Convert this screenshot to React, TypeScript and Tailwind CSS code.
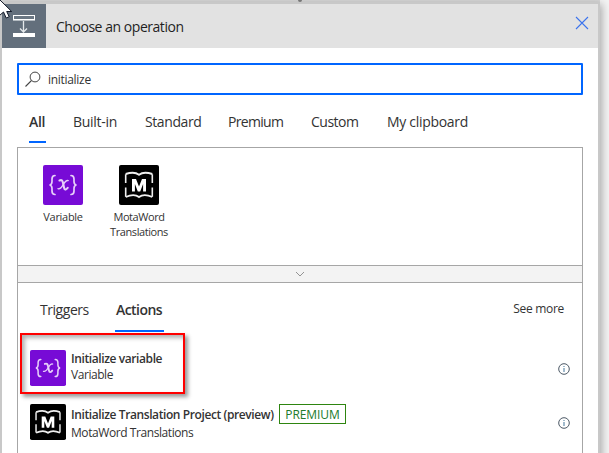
import React from "react";

function VariableIcon({ className }: { className: string }) {
  return (
    <svg viewBox="0 0 40 40" className={className}>
      <rect width="40" height="40" rx="2" fill="#770bd6" />
      <g fill="none" stroke="#e6cff9" strokeWidth="1.7" strokeLinecap="round">
        <path d="M12 10.500C9.500 10.500 9 11.500 9 14v2.500c0 2.300-.6 3.300-2.500 3.500 1.900.2 2.500 1.200 2.500 3.500V26c0 2.500.5 3.500 3 3.500" />
        <path d="M28 10.500c2.500 0 3 1 3 3.500v2.500c0 2.300.6 3.300 2.500 3.500-1.900.2-2.500 1.200-2.500 3.500V26c0 2.500-.5 3.500-3 3.500" />
        <path d="M16.500 15.500c2.500-1 3 .2 3.600 2.700l.9 4.300c.6 2.800 1.800 2.600 3.700.4" strokeWidth="2.100" />
        <path d="M25.200 15.600c-2.300-.8-4 2.400-5.200 4.400-1.300 2.300-2.900 4.500-5 3.700" strokeWidth="1.400" />
      </g>
    </svg>
  );
}

function MotaWordIcon({ className }: { className: string }) {
  return (
    <svg viewBox="0 0 40 40" className={className}>
      <rect width="40" height="40" rx="2" fill="#000" />
      <g fill="none" stroke="#f0f0f0" strokeWidth="1.600">
        <path d="M6.700 18V9.200M33.300 18V9.200M6.700 22.500v9.300M33.300 22.500v9.300" />
        <path d="M6.700 9C12 7.200 17 7.400 20 9.700c3-2.300 8-2.500 13.300-.7M6.700 32C12 29.600 17 29.700 20 32c3-2.300 8-2.400 13.300 0" strokeWidth="1.900" />
      </g>
      <path d="M13 26.500V14h4l3 7.600 3-7.600h4v12.500h-2.900V19l-2.900 7.500h-2.400L15.900 19v7.500z" fill="#fff" />
    </svg>
  );
}

function InfoIcon() {
  return (
    <svg width="12" height="12" viewBox="0 0 12 12" className="shrink-0">
      <circle cx="6" cy="6" r="5.300" fill="none" stroke="#4c5966" strokeWidth="1" />
      <path d="M6 5v4M6 3v1" stroke="#5583a5" strokeWidth="1.100" />
    </svg>
  );
}

export default function App() {
  return (
    <div className="relative h-[453px] w-[609px] overflow-hidden bg-[#f3f3f3] font-['Open_Sans','Noto_Sans',sans-serif] text-[#333] whitespace-nowrap">
      <div className="h-[2px] w-[600px] bg-[#d9d9d9]" />
      <div className="h-[470px] w-[600px] border-2 border-[#c8c8c8] bg-white shadow-[2px_2px_8px_rgba(0,0,0,0.3)]">
        <header className="flex h-11 items-center bg-[#e2e2e2]">
          <div className="h-11 w-11 bg-[#636f7c]">
            <svg width="44" height="44" viewBox="0 0 44 44">
              <rect x="11.500" y="11.500" width="21" height="4" fill="#6b7783" stroke="#fff" />
              <path d="M11 16.500h22" stroke="#b4bbc2" />
              <rect x="11" y="29" width="22" height="4" fill="#fff" />
              <path d="M21.500 17v11M18 24.500l3.500 3.500 3.500-3.500" fill="none" stroke="#e4e8eb" strokeWidth="1.300" />
            </svg>
          </div>
          <h1 className="ml-[10px] pt-px text-[14px] leading-5 tracking-[-0.46px] text-[#1f1f1f]">Choose an operation</h1>
          <svg width="14" height="14" viewBox="0 0 14 14" className="mr-[9px] mb-1.5 ml-auto">
            <path d="M1 1l12 12M13 1L1 13" stroke="#3b73ed" strokeWidth="1.100" />
          </svg>
        </header>

        <div className="mt-[15px] ml-[15px] flex h-8 w-[566px] items-center rounded-[1px] border-2 border-[#0065ff]">
          <svg width="16" height="16" viewBox="0 0 16 16" className="ml-1.5">
            <circle cx="10" cy="6" r="4.900" fill="none" stroke="#444" strokeWidth="1" />
            <path d="M6.500 9.500L.5 15.500" stroke="#444" strokeWidth="1.100" />
          </svg>
          <span className="ml-[7px] pt-0.5 text-[12px] tracking-[-0.3px]">initialize</span>
        </div>

        <nav className="ml-[27px] flex h-[52px] pt-4 text-[14px] leading-[21px]">
          <span className="h-8 w-[17px] border-b-2 border-[#0065ff] font-semibold tracking-[-0.3px]">All</span>
          <span className="ml-[27px] w-[45px] tracking-[-0.3px]">Built-in</span>
          <span className="ml-[27px] w-[55px] tracking-[-0.4px]">Standard</span>
          <span className="ml-[28px] w-[56px] tracking-[-0.7px]">Premium</span>
          <span className="ml-[27px] w-[48px] tracking-[-0.5px]">Custom</span>
          <span className="ml-[28px] tracking-[-0.3px]">My clipboard</span>
        </nav>

        <main className="ml-[15px] h-[330px] w-[566px] border border-[#a6a6a6]">
          <section className="flex h-[117px] pt-[17px] pl-[7px] text-center text-[11px] leading-[15px]">
            <div className="flex w-[76px] flex-col items-center">
              <VariableIcon className="h-10 w-10" />
              <span className="mt-1 tracking-[-0.3px]">Variable</span>
            </div>
            <div className="flex w-[76px] flex-col items-center">
              <MotaWordIcon className="h-10 w-10" />
              <span className="mt-1 tracking-[-0.42px]">MotaWord<br />Translations</span>
            </div>
          </section>
          <div className="flex h-[18px] items-center justify-center border-y border-[#a6a6a6] bg-[#f3f3f3]">
            <svg width="10" height="6" viewBox="0 0 10 6"><path d="M1 1l4 4 4-4" fill="none" stroke="#888" strokeWidth="0.900" /></svg>
          </div>
          <section>
            <div className="flex h-[49px] pt-[17px] pl-[22px] text-[14px] leading-[20px]">
              <span className="w-[49px] tracking-[-0.45px]">Triggers</span>
              <span className="ml-[26px] h-8 w-[49px] border-b-2 border-[#0065ff] pl-px font-semibold tracking-[-0.55px]">Actions</span>
              <span className="mr-[18px] ml-auto text-[12px] leading-[18px] tracking-[-0.3px]">See more</span>
            </div>
            <div className="mt-[18px] flex h-9 items-center pr-3 pl-3">
              <VariableIcon className="h-9 w-9" />
              <div className="-mt-0.5 ml-[5px] text-[12px] leading-4">
                <div className="font-semibold tracking-[-0.4px]">Initialize variable</div>
                <div className="tracking-[-0.45px]">Variable</div>
              </div>
              <div className="ml-auto flex pt-[2px]"><InfoIcon /></div>
            </div>
            <div className="mt-[18px] flex h-9 items-center pr-3 pl-3">
              <MotaWordIcon className="h-9 w-9" />
              <div className="ml-[5px] pt-0.5 text-[12px] leading-[18px]">
                <div className="flex h-5 items-center">
                  <span className="w-[208px] pt-0.5 font-semibold tracking-[-0.4px]">Initialize Translation Project (preview)</span>
                  <span className="flex h-5 w-[67px] items-center justify-center border border-[#2e8510] pt-px tracking-[-0.1px] text-[#207a2b]">PREMIUM</span>
                </div>
                <div className="tracking-[-0.42px]">MotaWord Translations</div>
              </div>
              <div className="ml-auto flex pt-[2px]"><InfoIcon /></div>
            </div>
          </section>
        </main>
      </div>
      <div className="absolute top-[333px] left-[20px] h-[61px] w-[165px] border-2 border-[#f00] shadow-[3px_3px_4px_rgba(0,0,0,0.4),inset_3px_3px_4px_rgba(0,0,0,0.3)]" />
      <div className="absolute top-0 left-[298px] h-0.5 w-1 rounded-b bg-[#777]" />
      <svg className="absolute top-0 left-0" width="12" height="19" viewBox="0 0 12 19">
        <path d="M-.5-.5v16l4-3.500 2.700 6 3-1.300L6.700 11.500h5z" fill="#fff" stroke="#111827" strokeWidth="1" />
      </svg>
    </div>
  );
}
